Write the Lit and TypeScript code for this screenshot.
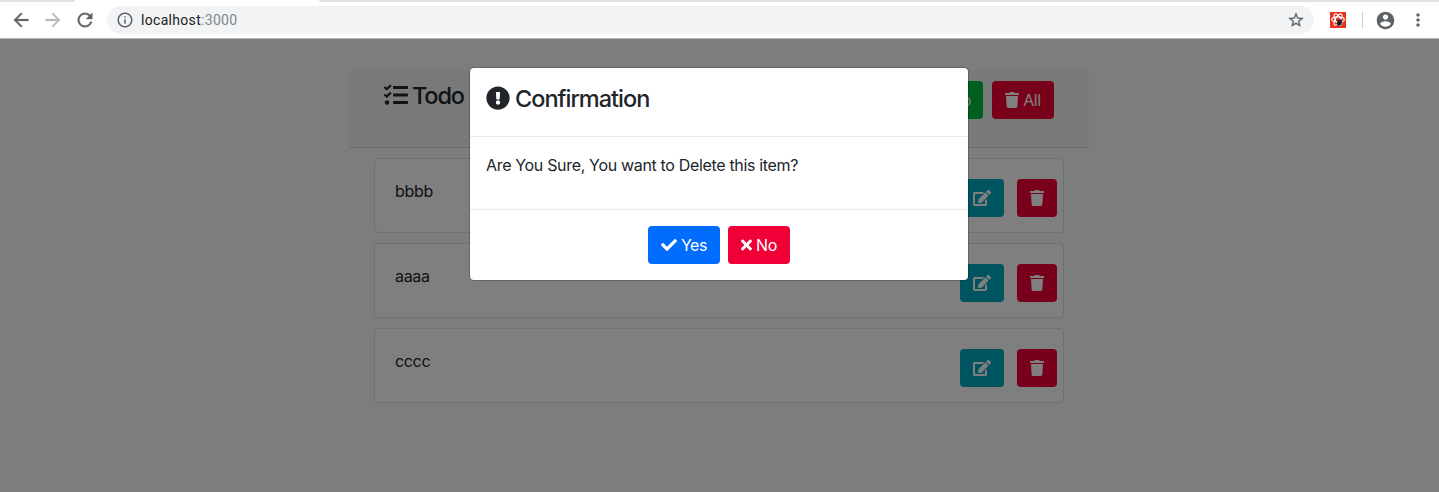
import { LitElement, html, css, svg } from "lit";
import { customElement } from "lit/decorators.js";

const shapes: Record<string, [string, string]> = {
  tasks: ["0 0 512 512", "M139.61 35.5a12 12 0 0 0-17 0L58.93 98.81l-22.7-22.12a12 12 0 0 0-17 0L3.53 92.41a12 12 0 0 0 0 17l47.59 47.4a12.78 12.78 0 0 0 17.61 0l15.59-15.62L156.52 69a12.09 12.09 0 0 0 .09-17zm0 159.19a12 12 0 0 0-17 0l-63.68 63.72-22.7-22.1a12 12 0 0 0-17 0L3.53 252a12 12 0 0 0 0 17L51 316.5a12.77 12.77 0 0 0 17.6 0l15.7-15.69 72.2-72.22a12 12 0 0 0 .09-16.9zM64 368c-26.49 0-48.59 21.5-48.59 48S37.53 464 64 464a48 48 0 0 0 0-96zm432 16H208a16 16 0 0 0-16 16v32a16 16 0 0 0 16 16h288a16 16 0 0 0 16-16v-32a16 16 0 0 0-16-16zm0-320H208a16 16 0 0 0-16 16v32a16 16 0 0 0 16 16h288a16 16 0 0 0 16-16V80a16 16 0 0 0-16-16zm0 160H208a16 16 0 0 0-16 16v32a16 16 0 0 0 16 16h288a16 16 0 0 0 16-16v-32a16 16 0 0 0-16-16z"],
  alert: ["0 0 512 512", "M504 256c0 136.997-111.043 248-248 248S8 392.997 8 256C8 119.083 119.043 8 256 8s248 111.083 248 248zm-248 50c-25.405 0-46 20.595-46 46s20.595 46 46 46 46-20.595 46-46-20.595-46-46-46zm-43.673-165.346l7.418 136c.347 6.364 5.609 11.346 11.982 11.346h48.546c6.373 0 11.635-4.982 11.982-11.346l7.418-136c.375-6.874-5.098-12.654-11.982-12.654h-63.383c-6.884 0-12.356 5.78-11.981 12.654z"],
  trash: ["0 0 448 512", "M432 32H312l-9.4-18.7A24 24 0 0 0 281.1 0H166.800a23.720 23.720 0 0 0-21.4 13.300L136 32H16A16 16 0 0 0 0 48v32a16 16 0 0 0 16 16h416a16 16 0 0 0 16-16V48a16 16 0 0 0-16-16zM53.200 467a48 48 0 0 0 47.900 45h245.800a48 48 0 0 0 47.900-45L416 128H32z"],
  edit: ["0 0 576 512", "M402.600 83.200l90.200 90.200c3.800 3.800 3.800 10 0 13.800L274.400 405.600l-92.800 10.300c-12.400 1.400-22.900-9.100-21.500-21.500l10.300-92.800L388.800 83.200c3.800-3.800 10-3.800 13.800 0zm162-22.900l-48.800-48.800c-15.200-15.200-39.900-15.200-55.200 0l-35.400 35.400c-3.800 3.800-3.800 10 0 13.800l90.200 90.200c3.800 3.800 10 3.800 13.800 0l35.400-35.400c15.200-15.300 15.200-40 0-55.200zM384 346.200V448H64V128h229.800c3.200 0 6.200-1.300 8.500-3.500l40-40c7.600-7.600 2.200-20.500-8.500-20.500H48C21.500 64 0 85.500 0 112v352c0 26.500 21.500 48 48 48h352c26.500 0 48-21.500 48-48V306.200c0-10.700-12.900-16-20.500-8.500l-40 40c-2.200 2.300-3.500 5.300-3.500 8.500z"],
  check: ["0 0 512 512", "M173.898 439.404l-166.400-166.400c-9.997-9.997-9.997-26.206 0-36.204l36.203-36.204c9.997-9.998 26.207-9.998 36.204 0L192 312.690 432.095 72.596c9.997-9.997 26.207-9.997 36.204 0l36.203 36.204c9.997 9.997 9.997 26.206 0 36.204l-294.400 294.401c-9.998 9.997-26.207 9.997-36.204-.001z"],
  times: ["0 0 352 512", "M242.720 256l100.070-100.070c12.280-12.280 12.280-32.190 0-44.480l-22.240-22.240c-12.280-12.280-32.190-12.280-44.480 0L176 189.280 75.930 89.210c-12.280-12.280-32.190-12.280-44.480 0L9.210 111.450c-12.280 12.280-12.280 32.190 0 44.480L109.280 256 9.210 356.070c-12.280 12.280-12.280 32.190 0 44.480l22.240 22.240c12.280 12.280 32.200 12.280 44.480 0L176 322.720l100.070 100.070c12.280 12.280 32.200 12.280 44.480 0l22.240-22.240c12.280-12.280 12.280-32.190 0-44.480L242.720 256z"],
  back: ["0 0 24 24", "M20 11H7.830l5.590-5.590L12 4l-8 8 8 8 1.410-1.410L7.830 13H20v-2z"],
  forward: ["0 0 24 24", "M12 4l-1.410 1.410L16.170 11H4v2h12.170l-5.580 5.590L12 20l8-8z"],
  reload: ["0 0 24 24", "M17.650 6.350C16.200 4.900 14.210 4 12 4c-4.420 0-7.990 3.580-7.990 8s3.570 8 7.990 8c3.730 0 6.840-2.550 7.730-6h-2.080c-.820 2.330-3.040 4-5.650 4-3.310 0-6-2.690-6-6s2.690-6 6-6c1.660 0 3.140.690 4.220 1.780L13 11h7V4l-2.350 2.350z"],
  info: ["0 0 24 24", "M11 17h2v-6h-2v6zm1-15C6.480 2 2 6.480 2 12s4.480 10 10 10 10-4.480 10-10S17.520 2 12 2zm0 18c-4.410 0-8-3.590-8-8s3.590-8 8-8 8 3.590 8 8-3.590 8-8 8zM11 9h2V7h-2v2z"],
  star: ["0 0 24 24", "M22 9.240l-7.190-.620L12 2 9.190 8.630 2 9.240l5.460 4.730L5.820 21 12 17.270 18.180 21l-1.630-7.030L22 9.240zM12 15.400l-3.760 2.270 1-4.280-3.320-2.880 4.380-.380L12 6.100l1.710 4.040 4.380.380-3.320 2.880 1 4.280L12 15.400z"],
  person: ["0 0 24 24", "M12 2C6.480 2 2 6.480 2 12s4.480 10 10 10 10-4.480 10-10S17.520 2 12 2zm0 3c1.660 0 3 1.340 3 3s-1.340 3-3 3-3-1.340-3-3 1.340-3 3-3zm0 14.200c-2.500 0-4.710-1.280-6-3.220.030-1.990 4-3.080 6-3.080 1.990 0 5.970 1.090 6 3.080-1.290 1.940-3.500 3.220-6 3.220z"],
  more: ["0 0 24 24", "M12 8c1.100 0 2-.9 2-2s-.9-2-2-2-2 .9-2 2 .9 2 2 2zm0 2c-1.100 0-2 .9-2 2s.9 2 2 2 2-.9 2-2-.9-2-2-2zm0 6c-1.100 0-2 .9-2 2s.9 2 2 2 2-.9 2-2-.9-2-2-2z"],
};

const icon = (name: string) => html`<svg class="icon ${name}" viewBox=${shapes[name][0]}>${svg`<path d=${shapes[name][1]}></path>`}</svg>`;

const base = css`
  * { box-sizing: border-box; }
  .icon { display: block; flex: none; fill: currentColor; }
`;

@customElement("browser-bar")
class BrowserBar extends LitElement {
  static styles = [base, css`
    :host { display: block; height: 39px; background: #fff; border-bottom: 1px solid #b5b7b6; font: 14px Roboto, sans-serif; color: #5f6368; }
    .tabs { display: flex; justify-content: space-between; height: 2px; }
    .tab { background: #dee1e6; height: 2px; }
    .left { width: 75px; border-bottom-right-radius: 3px; }
    .right { width: 1120px; border-bottom-left-radius: 3px; }
    .bar { display: flex; align-items: center; height: 36px; padding-left: 10px; }
    .back, .forward, .reload { width: 22px; height: 22px; margin-right: 10px; stroke: currentColor; stroke-width: 0.3; }
    .forward { color: #babcbe; }
    .reload { margin-right: 11px; }
    .address { display: flex; align-items: center; width: 1207px; height: 28px; border-radius: 14px; background: #f1f3f4; padding: 0 9px; }
    .info { width: 18px; height: 18px; }
    .url { flex: 1; margin-left: 7px; letter-spacing: 0.31px; color: #80868b; }
    .host { color: #202124; }
    .star { width: 18px; height: 18px; stroke: currentColor; stroke-width: 0.3; }
    .ext { display: block; width: 16px; height: 16px; margin-left: 16px; }
    .rule { width: 1px; height: 16px; margin: 0 12px 0 16px; background: #cacdd1; }
    .person { width: 21px; height: 21px; }
    .more { width: 20px; height: 20px; margin-left: 12px; }
  `];
  render() {
    return html`
      <div class="tabs"><div class="tab left"></div><div class="tab right"></div></div>
      <div class="bar">
        ${icon("back")}${icon("forward")}${icon("reload")}
        <div class="address">${icon("info")}<span class="url"><span class="host">localhost</span>:3000</span>${icon("star")}</div>
        <svg class="ext" viewBox="0 0 16 16">
          <rect width="16" height="16" fill="#e8301c"></rect>
          <g fill="none" stroke="#fff" stroke-width="1.1">
            <ellipse cx="8" cy="7.500" rx="6.300" ry="2.600"></ellipse>
            <ellipse cx="8" cy="7.500" rx="6.300" ry="2.600" transform="rotate(60 8 7.500)"></ellipse>
            <ellipse cx="8" cy="7.500" rx="6.300" ry="2.600" transform="rotate(120 8 7.500)"></ellipse>
          </g>
          <ellipse cx="9.500" cy="10.500" rx="2.200" ry="3.200" fill="#222" transform="rotate(25 9.500 10.500)"></ellipse>
          <path d="M6 8l6 5M12 7.500l-5 6M6.500 11h6" stroke="#222" stroke-width=".8"></path>
        </svg>
        <div class="rule"></div>${icon("person")}${icon("more")}
      </div>`;
  }
}

@customElement("app-root")
class AppRoot extends LitElement {
  static styles = [base, css`
    :host { display: block; position: relative; width: 1439px; height: 492px; overflow: hidden; font: 16px/24px Inter, sans-serif; color: #212529; }
    .page { height: 453px; padding: 31px 1px 0 0; background: #f8fdfa; }
    .card { width: 740px; margin: 0 auto; }
    .head { display: flex; height: 78px; padding: 11px 35px; background: #f0f4f2; border-bottom: 1px solid #d5d8d6; border-radius: 4px 4px 0 0; }
    .title { display: flex; flex: 1; gap: 4px; font-size: 23.5px; line-height: 29px; font-weight: 500; letter-spacing: -1.15px; }
    .tasks, .alert { width: 24px; height: 24px; margin-top: 2px; }
    .btn { display: flex; align-items: center; justify-content: center; height: 38px; border-radius: 4px; color: #fff; letter-spacing: -0.4px; gap: 4px; }
    .todo { justify-content: flex-end; width: 70px; padding-right: 12px; margin-right: 9px; background: #00be3e; }
    .all { width: 62px; background: #f00036; }
    .list { display: flex; flex-direction: column; gap: 10px; padding: 10px 25px; }
    .item { display: flex; height: 75px; padding: 20px 6px 0 20px; background: #fff; border: 1px solid #dfe1e0; border-radius: 4px; }
    .label { flex: 1; letter-spacing: -0.33px; }
    .edit-btn { width: 44px; margin-right: 13px; background: #00a9be; }
    .delete { width: 40px; background: #f00036; }
    .trash { width: 14px; height: 16px; }
    .edit { width: 18px; height: 16px; }
    .check { width: 16px; height: 16px; }
    .times { width: 11px; height: 16px; }
    .backdrop { position: absolute; inset: 39px 0 0; background: rgba(0, 0, 0, 0.5); }
    .modal { position: absolute; left: 470px; top: 68px; width: 498px; height: 212px; border-radius: 4px; background: #fff; box-shadow: 0 0 0 1px rgba(0, 0, 0, 0.2); }
    .m-head { display: flex; gap: 5px; height: 69px; padding: 16px; border-bottom: 1px solid #e9ecef; font-size: 23.5px; line-height: 29px; font-weight: 500; letter-spacing: -1px; }
    .m-body { height: 73px; padding: 16px; border-bottom: 1px solid #e9ecef; letter-spacing: -0.33px; white-space: nowrap; }
    .m-foot { display: flex; justify-content: center; gap: 8px; padding-top: 16px; }
    .yes { width: 72px; background: #006dff; }
    .no { width: 62px; background: #f00036; }
  `];
  render() {
    return html`
      <browser-bar></browser-bar>
      <div class="page">
        <div class="card">
          <div class="head">
            <div class="title">${icon("tasks")}<span>Todo</span></div>
            <div class="btn todo">Todo</div>
            <div class="btn all">${icon("trash")}<span>All</span></div>
          </div>
          <div class="list">
            ${["bbbb", "aaaa", "cccc"].map((t) => html`
              <div class="item">
                <div class="label">${t}</div>
                <div class="btn edit-btn">${icon("edit")}</div>
                <div class="btn delete">${icon("trash")}</div>
              </div>`)}
          </div>
        </div>
      </div>
      <div class="backdrop"></div>
      <div class="modal">
        <div class="m-head">${icon("alert")}<span>Confirmation</span></div>
        <div class="m-body">Are You Sure, You want to Delete this item?</div>
        <div class="m-foot">
          <div class="btn yes">${icon("check")}<span>Yes</span></div>
          <div class="btn no">${icon("times")}<span>No</span></div>
        </div>
      </div>`;
  }
}
